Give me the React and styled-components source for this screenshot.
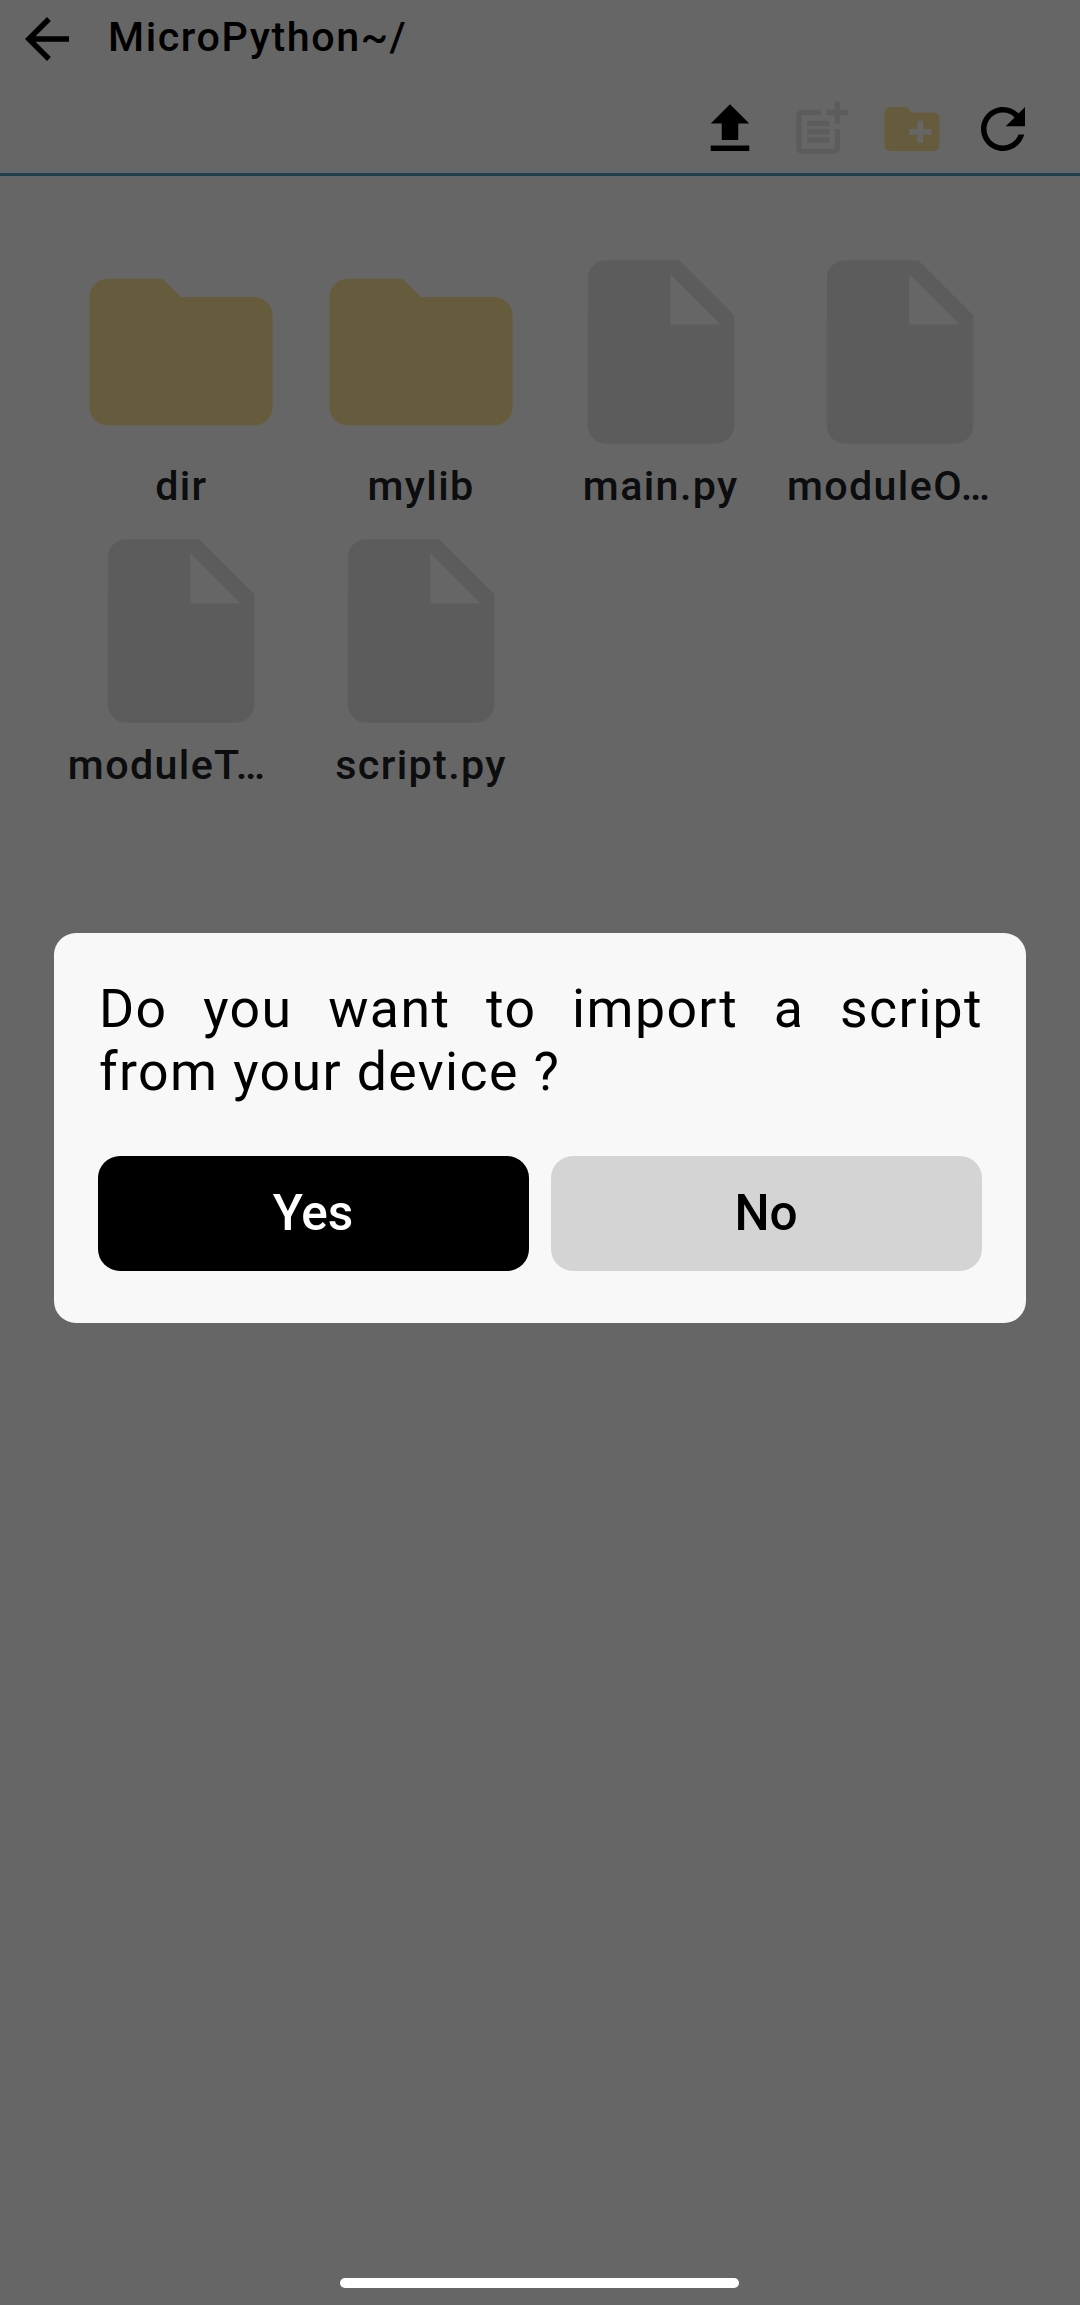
import React from "react";
import styled, { createGlobalStyle } from "styled-components";

const GlobalStyle = createGlobalStyle`
  *, *::before, *::after { box-sizing: border-box; }
  body { margin: 0; background: #fff; font-family: Roboto, "Noto Sans", sans-serif; }
`;

const Screen = styled.div`
  width: 1080px;
  height: 2305px;
  background: #fff;
  overflow: hidden;
`;

const Header = styled.header`
  height: 176px;
  border-bottom: 3px solid #4ba3cc;
`;

const TitleBar = styled.div`
  display: flex;
  align-items: center;
  gap: 28px;
  height: 78px;
  padding: 0 14px;
`;

const Title = styled.h1`
  margin: 0;
  font-size: 41.25px;
  line-height: 48px;
  font-weight: 500;
  letter-spacing: 1.57px;
  color: #000;
  padding-bottom: 4px;
`;

const Toolbar = styled.div`
  display: flex;
  justify-content: flex-end;
  gap: 25px;
  padding: 18px 44px 0;
`;

const IconButton = styled.button`
  display: flex;
  padding: 0;
  border: 0;
  background: none;
  color: ${(p) => p.$color || "#000"};
`;

const Glyph = styled.svg`
  display: block;
  width: ${(p) => p.$size}px;
  height: ${(p) => p.$size}px;
  fill: currentColor;
`;

const FileGrid = styled.main`
  display: grid;
  grid-template-columns: repeat(4, 239.7px);
  grid-auto-rows: 279px;
  padding: 66px 0 0 61.5px;
`;

const Entry = styled.div`
  display: flex;
  flex-direction: column;
  align-items: center;
  color: ${(p) => (p.$folder ? "#ffe699" : "#e6e6e6")};
`;

const EntryName = styled.span`
  width: 227px;
  font-size: 41.25px;
  line-height: 48px;
  font-weight: 500;
  letter-spacing: 1.35px;
  text-align: ${(p) => (p.$clipped ? "left" : "center")};
  color: #202124;
  white-space: nowrap;
`;

const Backdrop = styled.div`
  position: fixed;
  inset: 0;
  display: flex;
  flex-direction: column;
  align-items: center;
  padding-top: 933px;
  background: rgba(0, 0, 0, 0.6);
`;

const Dialog = styled.section`
  width: 972px;
  height: 390px;
  padding: 44px;
  border-radius: 22px;
  background: #f8f8f8;
`;

const Message = styled.p`
  margin: 0 -1px 0 1px;
  font-size: 53.6px;
  line-height: 63px;
  height: 179px;
  letter-spacing: 1.4px;
  text-align: justify;
  color: #000;
`;

const Actions = styled.div`
  display: grid;
  grid-template-columns: 1fr 1fr;
  gap: 22px;
`;

const ActionButton = styled.button`
  height: 115px;
  padding: 0 1px 2px 0;
  border: 0;
  border-radius: 22px;
  font-family: inherit;
  font-size: 49.5px;
  font-weight: 500;
  background: ${(p) => (p.$primary ? "#000" : "#d4d4d4")};
  color: ${(p) => (p.$primary ? "#fff" : "#000")};
`;

const HomeIndicator = styled.div`
  width: 399px;
  height: 10px;
  margin: auto 1px 17px 0;
  border-radius: 5px;
  background: #fff;
`;

const icons = {
  back: "M20 11H7.83l5.59-5.59L12 4l-8 8 8 8 1.41-1.41L7.83 13H20v-2z",
  upload: "M9 16h6v-6h4l-7-7-7 7h4v6zm-4 2h14v2H5v-2z",
  newFile:
    "M17 19.22H5V7h7V5H5c-1.1 0-2 .9-2 2v12c0 1.1.9 2 2 2h12c1.1 0 2-.9 2-2v-7h-2v7.22zM19 2h-2v3h-3c.01.01 0 2 0 2h3v2.99c.01.01 2 0 2 0V7h3V5h-3V2zM7 9h8v2H7zM7 12v2h8v-2H7zM7 15h8v2H7z",
  newFolder:
    "M20 6h-8l-2-2H4c-1.11 0-1.99.89-1.99 2L2 18c0 1.11.89 2 2 2h16c1.11 0 2-.89 2-2V8c0-1.11-.89-2-2-2zm-1 8h-3v3h-2v-3h-3v-2h3V9h2v3h3v2z",
  refresh:
    "M17.65 6.35C16.2 4.9 14.21 4 12 4c-4.42 0-7.99 3.58-7.99 8s3.57 8 7.99 8c3.73 0 6.84-2.55 7.73-6h-2.08c-.82 2.33-3.04 4-5.65 4-3.31 0-6-2.69-6-6s2.69-6 6-6c1.66 0 3.14.69 4.22 1.78L13 11h7V4l-2.35 2.35z",
  folder:
    "M10 4H4c-1.1 0-1.99.9-1.99 2L2 18c0 1.1.9 2 2 2h16c1.1 0 2-.9 2-2V8c0-1.1-.9-2-2-2h-8l-2-2z",
  file: "M6 2c-1.1 0-1.99.9-1.99 2L4 20c0 1.1.89 2 1.99 2H18c1.1 0 2-.9 2-2V8l-6-6H6zm7 7V3.5L18.5 9H13z",
};

const Icon = ({ name, size = 66 }) => (
  <Glyph viewBox="0 0 24 24" $size={size} aria-hidden="true">
    <path d={icons[name]} />
  </Glyph>
);

const tools = [
  { icon: "upload", label: "Import" },
  { icon: "newFile", label: "New file", color: "#e6e6e6" },
  { icon: "newFolder", label: "New folder", color: "#ffe699" },
  { icon: "refresh", label: "Refresh" },
];

const entries = [
  { name: "dir", folder: true },
  { name: "mylib", folder: true },
  { name: "main.py" },
  { name: "moduleO…", clipped: true },
  { name: "moduleT…", clipped: true },
  { name: "script.py" },
];

export default function App() {
  return (
    <>
      <GlobalStyle />
      <Screen>
        <Header>
          <TitleBar>
            <IconButton aria-label="Back">
              <Icon name="back" />
            </IconButton>
            <Title>MicroPython~/</Title>
          </TitleBar>
          <Toolbar>
            {tools.map((t) => (
              <IconButton key={t.icon} aria-label={t.label} $color={t.color}>
                <Icon name={t.icon} />
              </IconButton>
            ))}
          </Toolbar>
        </Header>
        <FileGrid>
          {entries.map((e) => (
            <Entry key={e.name} $folder={e.folder}>
              <Icon name={e.folder ? "folder" : "file"} size={220} />
              <EntryName $clipped={e.clipped}>{e.name}</EntryName>
            </Entry>
          ))}
        </FileGrid>
      </Screen>
      <Backdrop>
        <Dialog role="dialog">
          <Message>Do you want to import a script from your device ?</Message>
          <Actions>
            <ActionButton $primary>Yes</ActionButton>
            <ActionButton>No</ActionButton>
          </Actions>
        </Dialog>
        <HomeIndicator />
      </Backdrop>
    </>
  );
}
